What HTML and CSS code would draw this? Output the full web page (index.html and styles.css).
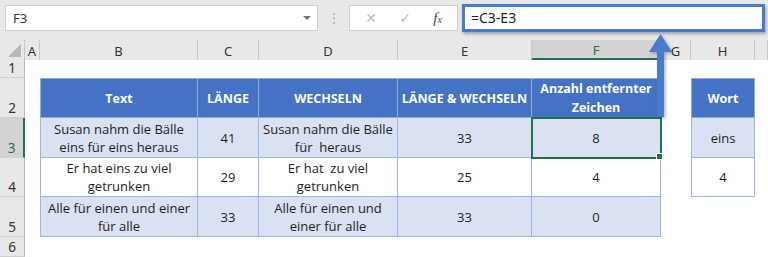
FILE: index.html
```html
<!DOCTYPE html>
<html lang="de">
<head>
    <meta charset="UTF-8">
    <title>Zeichen entfernen</title>
    <link rel="stylesheet" href="styles.css">
</head>
<body>
    <div class="topbar">
        <div class="namebox">
            <span>F3</span>
            <span class="drop"></span>
        </div>
        <div class="dots">⋮</div>
        <div class="buttons">
            <span class="btn">✕</span>
            <span class="btn">✓</span>
            <span class="btn fx">f<small>x</small></span>
        </div>
        <div class="formula">=C3-E3</div>
    </div>

    <div class="sheet">
        <!-- column headers -->
        <div class="corner"><span class="tri"></span></div>
        <div class="colhead">A</div>
        <div class="colhead">B</div>
        <div class="colhead">C</div>
        <div class="colhead">D</div>
        <div class="colhead">E</div>
        <div class="colhead active">F</div>
        <div class="colhead">G</div>
        <div class="colhead">H</div>
        <div class="colhead"></div>

        <!-- row 1 -->
        <div class="rowhead">1</div>
        <div class="blank span9"></div>

        <!-- row 2 -->
        <div class="rowhead">2</div>
        <div class="blank"></div>
        <div class="cell head first top">Text</div>
        <div class="cell head top">LÄNGE</div>
        <div class="cell head top">WECHSELN</div>
        <div class="cell head top">LÄNGE &amp; WECHSELN</div>
        <div class="cell head top">Anzahl entfernter Zeichen</div>
        <div class="blank"></div>
        <div class="cell head first top">Wort</div>
        <div class="blank"></div>

        <!-- row 3 -->
        <div class="rowhead active">3</div>
        <div class="blank"></div>
        <div class="cell band first">Susan nahm die Bälle<br>eins für eins heraus</div>
        <div class="cell band">41</div>
        <div class="cell band">Susan nahm die Bälle<br>für&nbsp; heraus</div>
        <div class="cell band">33</div>
        <div class="cell band sel">8</div>
        <div class="blank"></div>
        <div class="cell band first">eins</div>
        <div class="blank"></div>

        <!-- row 4 -->
        <div class="rowhead">4</div>
        <div class="blank"></div>
        <div class="cell first">Er hat eins zu viel<br>getrunken</div>
        <div class="cell">29</div>
        <div class="cell">Er hat&nbsp; zu viel<br>getrunken</div>
        <div class="cell">25</div>
        <div class="cell">4</div>
        <div class="blank"></div>
        <div class="cell first">4</div>
        <div class="blank"></div>

        <!-- row 5 -->
        <div class="rowhead">5</div>
        <div class="blank"></div>
        <div class="cell band first">Alle für einen und einer<br>für alle</div>
        <div class="cell band">33</div>
        <div class="cell band">Alle für einen und<br>einer für alle</div>
        <div class="cell band">33</div>
        <div class="cell band">0</div>
        <div class="blank span3"></div>

        <!-- row 6 -->
        <div class="rowhead">6</div>
        <div class="blank span9"></div>
    </div>

    <!-- arrow from the formula bar down to F3 -->
    <svg class="arrow" width="40" height="100" viewBox="0 0 40 100">
        <defs>
            <filter id="sh" x="-50%" y="-20%" width="200%" height="140%">
                <feDropShadow dx="1.5" dy="1.5" stdDeviation="1.5" flood-color="#000" flood-opacity="0.3"/>
            </filter>
        </defs>
        <path d="M16.5 4 L28 22 L20 22 L20 87 L13 87 L13 22 L5 22 Z" fill="#4a7acb" filter="url(#sh)"/>
    </svg>
</body>
</html>
```

FILE: styles.css
```css
body {
    margin: 0;
    width: 768px;
    height: 257px;
    overflow: hidden;
    background-color: #ffffff;
    font-family: "Open Sans", Arial, sans-serif;
    position: relative;
}

.topbar {
    height: 40px;
    background-color: #e8e8e8;
    display: flex;
    align-items: flex-start;
    padding: 5px 0 0 5px;
    box-sizing: border-box;
}

.namebox {
    width: 313px;
    height: 26px;
    background-color: #fff;
    border: 1px solid #d0d0d0;
    box-sizing: border-box;
    display: flex;
    align-items: center;
    justify-content: space-between;
    padding: 0 6px 0 7px;
    font-family: "Noto Sans", sans-serif;
    font-size: 13px;
    color: #333;
}

.drop {
    width: 0;
    height: 0;
    border-left: 4px solid transparent;
    border-right: 4px solid transparent;
    border-top: 4px solid #777;
}

.dots {
    width: 31px;
    text-align: center;
    color: #b0b0b0;
    font-size: 14px;
    line-height: 26px;
}

.buttons {
    width: 109px;
    height: 26px;
    background-color: #fff;
    border: 1px solid #d0d0d0;
    box-sizing: border-box;
    display: flex;
    align-items: center;
    justify-content: space-around;
    padding: 0 4px;
}

.btn {
    color: #bcbcbc;
    font-family: "DejaVu Sans", sans-serif;
    font-size: 14px;
}

.fx {
    color: #444;
    font-family: "Liberation Serif", serif;
    font-style: italic;
    font-size: 15px;
}

.fx small {
    font-size: 10px;
}

.formula {
    margin-left: 4px;
    margin-top: -1px;
    width: 303px;
    height: 28px;
    background-color: #fff;
    border: 3px solid #4a7acb;
    box-sizing: border-box;
    box-shadow: 1px 2px 3px rgba(0, 0, 0, 0.3);
    font-family: "Noto Sans", sans-serif;
    font-size: 14px;
    color: #222;
    line-height: 22px;
    padding-left: 6px;
}

.sheet {
    display: grid;
    grid-template-columns: 25px 15px 158px 61px 139px 134px 129px 30px 64px 1fr;
    grid-template-rows: 20px 18px 40px 40px 39px 40px 20px;
}

.corner {
    background-color: #e8e8e8;
    border-right: 1px solid #c8c8c8;
    box-sizing: border-box;
    position: relative;
}

.tri {
    position: absolute;
    right: 3px;
    bottom: 3px;
    width: 0;
    height: 0;
    border-left: 13px solid transparent;
    border-bottom: 13px solid #b7b7b7;
}

.colhead {
    background-color: #e8e8e8;
    border-right: 1px solid #c8c8c8;
    box-sizing: border-box;
    font-family: "Noto Sans", sans-serif;
    font-size: 13px;
    color: #333;
    text-align: center;
    line-height: 20px;
    padding-top: 1px;
}

.colhead.active {
    background-color: #d3d3d3;
    border-bottom: 2px solid #217346;
    color: #217346;
    line-height: 18px;
}

.rowhead {
    background-color: #e8e8e8;
    border-right: 1px solid #bcbcbc;
    border-bottom: 1px solid #cfcfcf;
    box-sizing: border-box;
    font-family: "Noto Sans", sans-serif;
    font-size: 13.5px;
    color: #333;
    display: flex;
    align-items: flex-end;
    justify-content: center;
    line-height: 17px;
}

.rowhead.active {
    background-color: #d3d3d3;
    border-right: 2px solid #217346;
    color: #217346;
}

.span9 {
    grid-column: span 9;
}

.span3 {
    grid-column: span 3;
}

.cell {
    box-sizing: border-box;
    border-right: 1px solid #9db5e2;
    border-bottom: 1px solid #9db5e2;
    display: flex;
    align-items: center;
    justify-content: center;
    text-align: center;
    font-family: "Open Sans", sans-serif;
    font-size: 13px;
    line-height: 18px;
    color: #1e1e1e;
}

.cell.first {
    border-left: 1px solid #9db5e2;
}

.cell.top {
    border-top: 1px solid #9db5e2;
}

.cell.head {
    background-color: #4472c4;
    color: #fff;
    font-weight: bold;
    font-size: 12.5px;
    line-height: 19px;
    border-color: #8eaadc;
}

.cell.band {
    background-color: #d9e1f2;
}

.sel {
    position: relative;
    outline: 2px solid #217346;
    outline-offset: -1px;
}

.sel::after {
    content: "";
    position: absolute;
    right: -3px;
    bottom: -3px;
    width: 5px;
    height: 5px;
    background-color: #217346;
    border: 1px solid #fff;
}

.arrow {
    position: absolute;
    left: 644px;
    top: 30px;
}
```
